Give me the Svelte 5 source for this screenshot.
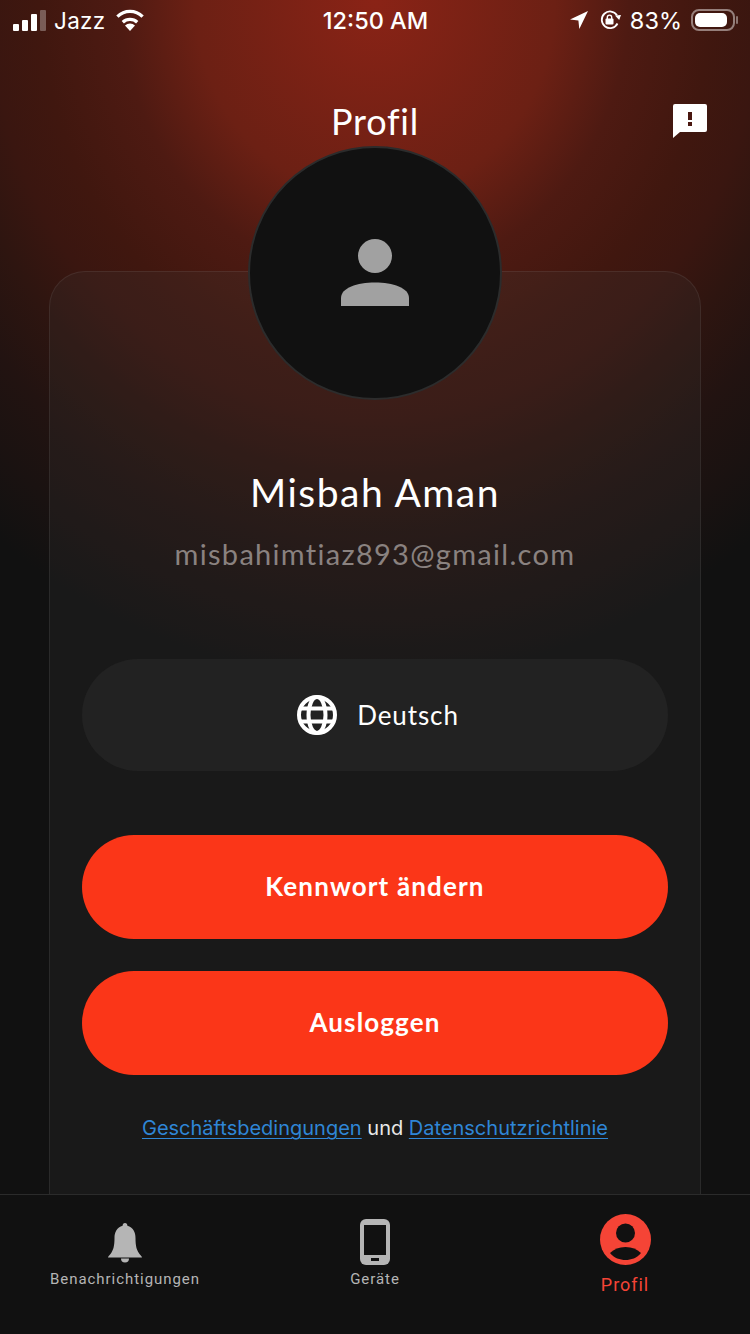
<script>
  const tabs = [
    { label: 'Benachrichtigungen', icon: 'bell' },
    { label: 'Geräte', icon: 'phone' },
    { label: 'Profil', icon: 'user', active: true }
  ];
</script>

<div class="page">
  <div class="status">
    <div class="side left">
      <span class="signal"><i class="b1"></i><i class="b2"></i><i class="b3"></i><i class="b4"></i></span>
      <span class="carrier">Jazz</span>
      <svg class="wifi" width="30" height="22" viewBox="0 0 30 22">
        <path d="M15 22l-5-5.600a7.400 7.400 0 0 1 10 0z" fill="#fff"/>
        <path d="M7.800 13.200a10.500 10.500 0 0 1 14.400 0" fill="none" stroke="#fff" stroke-width="3.300"/>
        <path d="M2.400 7.600a18 18 0 0 1 25.200 0" fill="none" stroke="#fff" stroke-width="3.300"/>
      </svg>
    </div>
    <div class="time">12:50 AM</div>
    <div class="side right">
      <svg class="arrow" width="18" height="18" viewBox="0 0 18 18"><path d="M18 0L0 8.600l8.400.9.900 8.500z" fill="#fff"/></svg>
      <svg class="lock" width="22" height="20" viewBox="0 0 22 20">
        <path d="M17.500 13.500A8.300 8.300 0 1 1 17 5.200" fill="none" stroke="#fff" stroke-width="1.800"/>
        <path d="M15 5.500l6-.5-1.800 5z" fill="#fff"/>
        <rect x="5.500" y="8.500" width="8" height="6" rx="1" fill="#fff"/>
        <path d="M7.300 9V7.300a2.200 2.200 0 0 1 4.400 0V9" fill="none" stroke="#fff" stroke-width="1.400"/>
      </svg>
      <span class="pct">83%</span>
      <span class="battery"><span class="level"></span></span>
      <span class="nub"></span>
    </div>
  </div>

  <header class="head">
    <h1>Profil</h1>
    <svg class="feedback" width="36" height="34" viewBox="0 0 36 34">
      <path d="M3 0h30a2 2 0 0 1 2 2v24a2 2 0 0 1-2 2H8l-7 6V2a2 2 0 0 1 2-2z" fill="#fff"/>
      <rect x="16" y="8" width="4" height="8" fill="#4a1710"/>
      <rect x="16" y="18" width="4" height="4" fill="#4a1710"/>
    </svg>
  </header>

  <main class="card">
    <div class="avatar">
      <svg width="68" height="68" viewBox="0 0 68 68">
        <circle cx="34" cy="17" r="17" fill="#a1a1a1"/>
        <path d="M0 67V59C0 49 16 43.500 34 43.500S68 49 68 59v8z" fill="#a1a1a1"/>
      </svg>
    </div>
    <div class="name">Misbah Aman</div>
    <div class="email">misbahimtiaz893@gmail.com</div>

    <div class="lang">
      <svg width="40" height="40" viewBox="0 0 40 40" fill="none" stroke="#fff" stroke-width="4">
        <circle cx="20" cy="20" r="18"/>
        <ellipse cx="20" cy="20" rx="8.500" ry="18"/>
        <path d="M4 13.500h32M4 26.500h32"/>
      </svg>
      <span>Deutsch</span>
    </div>

    <button class="cta first">Kennwort ändern</button>
    <button class="cta">Ausloggen</button>

    <p class="legal"><a href="#terms">Geschäftsbedingungen</a> und <a href="#privacy">Datenschutzrichtlinie</a></p>
  </main>

  <nav class="tabs">
    {#each tabs as t}
      <div class="tab" class:active={t.active}>
        {#if t.icon === 'bell'}
          <svg class="ic bell" width="36" height="40" viewBox="0 0 36 40">
            <path d="M18 0c1.500 0 2.400 1.200 2.400 2.800C26 4.500 28.500 9 28.500 15c0 8 1.200 11.500 3 14.500 1.200 2 3.200 3.500 3.500 5H1c.3-1.500 2.300-3 3.500-5 1.800-3 3-6.500 3-14.500 0-6 2.500-10.500 8.100-12.200C15.600 1.200 16.500 0 18 0z" fill="#b5b5b5"/>
            <path d="M14 35.500h8a4 4 0 0 1-8 0z" fill="#b5b5b5"/>
          </svg>
        {:else if t.icon === 'phone'}
          <svg class="ic phone" width="30" height="46" viewBox="0 0 30 46">
            <rect width="30" height="46" rx="6" fill="#b5b5b5"/>
            <rect x="4" y="6" width="22" height="30" fill="#111"/>
            <rect x="11" y="39" width="8" height="3" fill="#111"/>
          </svg>
        {:else}
          <svg class="ic user" width="51" height="51" viewBox="0 0 51 51">
            <circle cx="25.500" cy="25.500" r="25.500" fill="#f54436"/>
            <circle cx="25.500" cy="19" r="9.500" fill="#111"/>
            <path d="M10 39c4-4 9-6 15.500-6S37 35 41 39c-4 5-10 7-15.500 7S14 44 10 39z" fill="#111"/>
          </svg>
        {/if}
        <span class="label">{t.label}</span>
      </div>
    {/each}
  </nav>
</div>

<style>
  :global(body) { margin: 0; background: #111; }
  .page {
    position: relative;
    width: 750px;
    height: 1334px;
    overflow: hidden;
    display: flex;
    flex-direction: column;
    color: #fff;
    font-family: "Lato", "Liberation Sans", sans-serif;
    background: radial-gradient(ellipse 620px 680px at 375px 0,
      #8a2316 0, #6c2014 29%, #4e1a12 41%, #40170f 54%, #3a1610 62%, #2e1510 70%, #221311 80%, #1a1211 90%, #111 100%);
  }
  .status {
    position: relative;
    height: 40px;
    flex: none;
    display: grid;
    grid-template-columns: 1fr auto 1fr;
    align-items: center;
    padding: 0 12px 0 13px;
    font-family: "Inter", sans-serif;
    font-size: 24px;
  }
  .side { display: flex; align-items: center; }
  .right { justify-content: flex-end; }
  .signal { display: flex; align-items: flex-end; gap: 3px; height: 21px; margin-right: 8px; }
  .signal i { width: 6px; background: #fff; border-radius: 1px; display: block; }
  .b1 { height: 7px; } .b2 { height: 11px; } .b3 { height: 17px; }
  .signal .b4 { height: 21px; background: rgba(255,255,255,.3); }
  .carrier { font-size: 22.500px; letter-spacing: .3px; margin-right: 9px; }
  .time { font-weight: 500; font-size: 23.500px; }
  .arrow { margin-right: 12px; }
  .lock { margin-right: 8px; }
  .pct { font-size: 23.500px; margin-right: 9px; }
  .battery {
    width: 44px; height: 22px; border: 2px solid rgba(255,255,255,.45);
    border-radius: 8px; padding: 2px; box-sizing: border-box; display: flex;
  }
  .level { width: 32px; background: #fff; border-radius: 5px; }
  .nub { width: 2px; height: 8px; background: rgba(255,255,255,.4); margin-left: 1px; border-radius: 1px; }

  .head {
    position: relative;
    height: 231px;
    display: flex;
    align-items: flex-start;
    justify-content: center;
    flex: none;
  }
  h1 { font-size: 36px; font-weight: 400; margin: 59px 0 0; line-height: 44px; letter-spacing: .8px; }
  .feedback { position: absolute; right: 42px; top: 64px; }

  .card {
    position: relative;
    flex: 1;
    margin: 0 49px;
    min-height: 0;
    padding: 0 32px;
    border: 1px solid rgba(255,255,255,.07);
    border-bottom: 0;
    border-radius: 36px 36px 0 0;
    background: rgba(60, 60, 60, .2);
    display: flex;
    flex-direction: column;
    align-items: stretch;
    text-align: center;
  }
  .avatar {
    width: 254px;
    height: 254px;
    box-sizing: border-box;
    border-radius: 50%;
    background: #111;
    border: 2px solid #2c2c2c;
    align-self: center;
    margin-top: -126px;
    display: flex;
    align-items: center;
    justify-content: center;
    flex: none;
  }
  .name { font-size: 39px; margin-top: 69px; line-height: 46px; letter-spacing: 1.500px; }
  .email { font-size: 29px; line-height: 34px; margin-top: 22px; color: #8a8280; letter-spacing: 1.300px; }
  .lang {
    height: 112px;
    margin-top: 88px;
    border-radius: 56px;
    background: #222;
    display: flex;
    align-items: center;
    justify-content: center;
    gap: 20px;
    font-size: 26px;
    letter-spacing: .9px;
    padding-left: 6px;
    flex: none;
  }
  .cta {
    height: 104px;
    border: 0;
    border-radius: 52px;
    background: #fb3618;
    color: #fff;
    font: 700 26px "Lato", sans-serif;
    letter-spacing: 1.150px;
    margin-top: 32px;
    padding-bottom: 3px;
    flex: none;
  }
  .first { margin-top: 64px; }
  .legal { font: 400 20px "Inter", sans-serif; margin: 39px -20px 0; line-height: 28px; color: #e8e8e8; }
  .legal a { color: #2f86d6; text-underline-offset: 3px; text-decoration-thickness: 1px; }

  .tabs {
    position: relative;
    height: 140px;
    flex: none;
    background: #111;
    border-top: 1px solid #2b2b2b;
    box-sizing: border-box;
    display: grid;
    grid-template-columns: repeat(3, 1fr);
    font-family: "Roboto", sans-serif;
  }
  .tab { display: flex; flex-direction: column; align-items: center; color: #b5b5b5; font-size: 15px; letter-spacing: .95px; }
  .ic { display: block; flex: none; }
  .bell { margin-top: 28px; }
  .phone { margin-top: 24px; margin-bottom: 4px; }
  .bell + .label { margin-top: 6px; }
  .user { margin-top: 19px; }
  .active { color: #f54436; font-size: 18px; }
  .active .label { margin-top: 10px; }
  .label { line-height: 20px; }
</style>
